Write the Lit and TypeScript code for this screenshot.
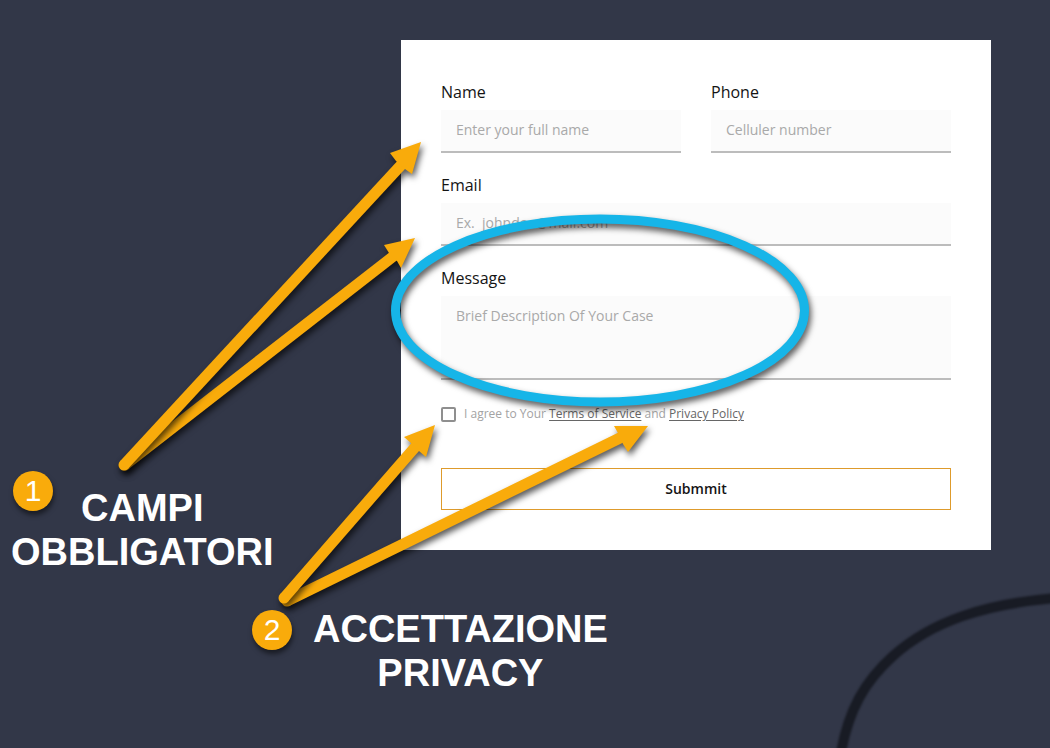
import { LitElement, html, svg, css } from "lit";
import { customElement } from "lit/decorators.js";

interface Arrow {
  tail: [number, number];
  neck: [number, number];
  head: string;
}

// Drawn back to front: the first arrow of each pair lies under the second.
const ARROWS: Arrow[] = [
  { tail: [125, 465], neck: [395, 255], head: "415,238 384,245 389,253 397,261 401,268" },
  { tail: [124, 465], neck: [403, 163], head: "421,142 390,153 396,161 405,169 412,174" },
  { tail: [287, 601], neck: [624, 436], head: "648,426 614,426 618,433 623,444 628,452" },
  { tail: [284, 598], neck: [417, 445], head: "435,425 404,437 411,443 419,451 426,457" },
];

@customElement("app-root")
export class AppRoot extends LitElement {
  static styles = css`
    :host {
      display: block;
      position: relative;
      box-sizing: border-box;
      min-height: 100vh;
      overflow: hidden;
      padding: 40px 59px 40px 401px;
      background: #323748;
      font-family: "Open Sans", sans-serif;
      color: #141414;
    }
    * { box-sizing: border-box; }

    .backdrop, .mark {
      position: absolute;
      top: 0;
      left: 0;
      pointer-events: none;
    }
    .curve { filter: blur(1px); }
    .mark { filter: drop-shadow(2px 4px 3px rgba(0, 0, 0, 0.65)); }

    .card {
      position: relative;
      display: flex;
      flex-direction: column;
      gap: 20px;
      padding: 40px;
      background: #fff;
    }
    .row {
      display: grid;
      grid-template-columns: 1fr 1fr;
      gap: 30px;
    }
    .field {
      display: flex;
      flex-direction: column;
      gap: 6px;
      min-width: 0;
    }
    .label {
      font-size: 16px;
      line-height: 24px;
    }
    .control {
      display: block;
      width: 100%;
      height: 43px;
      margin: 0;
      padding: 0 15px 2px;
      border: 0;
      border-bottom: 2px solid #bcbcbc;
      border-radius: 0;
      background: #fbfbfb;
      font: 14px/20px "Open Sans", sans-serif;
      color: #333;
      outline: 0;
      resize: none;
    }
    .area {
      height: 84px;
      padding-top: 10px;
    }
    .control::placeholder { color: #a9a9a9; opacity: 1; }

    .consent {
      display: flex;
      align-items: center;
      gap: 8px;
      margin-top: 5px;
      font-size: 12px;
      line-height: 18px;
      color: #a3a3a3;
    }
    .tick {
      appearance: none;
      flex: none;
      width: 15px;
      height: 15px;
      margin: 0;
      border: 2px solid #8f8f8f;
      border-radius: 2px;
      background: #fff;
    }
    .tick:checked { background: #8f8f8f; }
    .link { color: #666; text-underline-offset: 2px; }

    .submit {
      height: 42px;
      margin-top: 25px;
      border: 1px solid #de9b2c;
      background: #fff;
      font: 600 14px/20px "Open Sans", sans-serif;
      color: #141414;
    }

    .note {
      position: absolute;
      margin: 0;
      font: bold 38px/44px "Liberation Sans", sans-serif;
      text-align: center;
      white-space: nowrap;
      color: #fff;
    }
    .note-fields { left: 11px; top: 486px; }
    .note-privacy { left: 313px; top: 607px; }

    .badge {
      position: absolute;
      display: grid;
      place-items: center;
      width: 40px;
      height: 40px;
      border-radius: 50%;
      background: #f9ab0b;
      box-shadow: 1px 4px 5px rgba(0, 0, 0, 0.5);
      font: 30px/40px "Liberation Sans", sans-serif;
      color: #fff;
    }
    .badge-fields { left: 13px; top: 471px; }
    .badge-privacy { left: 252px; top: 610px; }
  `;

  private arrow(a: Arrow) {
    return html`<svg class="mark" width="1050" height="748" viewBox="0 0 1050 748" aria-hidden="true">
      ${svg`<line x1=${a.tail[0]} y1=${a.tail[1]} x2=${a.neck[0]} y2=${a.neck[1]}
          stroke="#f9ab0b" stroke-width="11"></line>
        <circle cx=${a.tail[0]} cy=${a.tail[1]} r="5.5" fill="#f9ab0b"></circle>
        <polygon points=${a.head} fill="#f9ab0b"></polygon>`}
    </svg>`;
  }

  render() {
    return html`
      <svg class="backdrop" width="1050" height="748" viewBox="0 0 1050 748" aria-hidden="true">
        <path class="curve" d="M841 752C849 710 864 682 893 656C932 621 985 604 1056 598"
          fill="none" stroke="#181b24" stroke-width="10"></path>
      </svg>

      <form class="card" @submit=${(e: Event) => e.preventDefault()}>
        <div class="row">
          <div class="field">
            <label class="label" for="name">Name</label>
            <input class="control" id="name" type="text" placeholder="Enter your full name">
          </div>
          <div class="field">
            <label class="label" for="phone">Phone</label>
            <input class="control" id="phone" type="tel" placeholder="Celluler number">
          </div>
        </div>
        <div class="field">
          <label class="label" for="email">Email</label>
          <input class="control" id="email" type="email" placeholder="Ex.  johndoe@mail.com">
        </div>
        <div class="field">
          <label class="label" for="message">Message</label>
          <textarea class="control area" id="message" placeholder="Brief Description Of Your Case"></textarea>
        </div>
        <div class="consent">
          <input class="tick" id="agree" type="checkbox">
          <label for="agree">I agree to Your <a class="link" href="#terms">Terms of Service</a> and <a class="link" href="#privacy">Privacy Policy</a></label>
        </div>
        <button class="submit" type="submit">Submmit</button>
      </form>

      <svg class="mark" width="1050" height="748" viewBox="0 0 1050 748" aria-hidden="true">
        <ellipse cx="600" cy="310.5" rx="204.5" ry="91.5" fill="none" stroke="#16b5e8" stroke-width="9"></ellipse>
      </svg>
      ${ARROWS.map((a) => this.arrow(a))}

      <span class="badge badge-fields">1</span>
      <p class="note note-fields">CAMPI<br>OBBLIGATORI</p>
      <span class="badge badge-privacy">2</span>
      <p class="note note-privacy">ACCETTAZIONE<br>PRIVACY</p>
    `;
  }
}
